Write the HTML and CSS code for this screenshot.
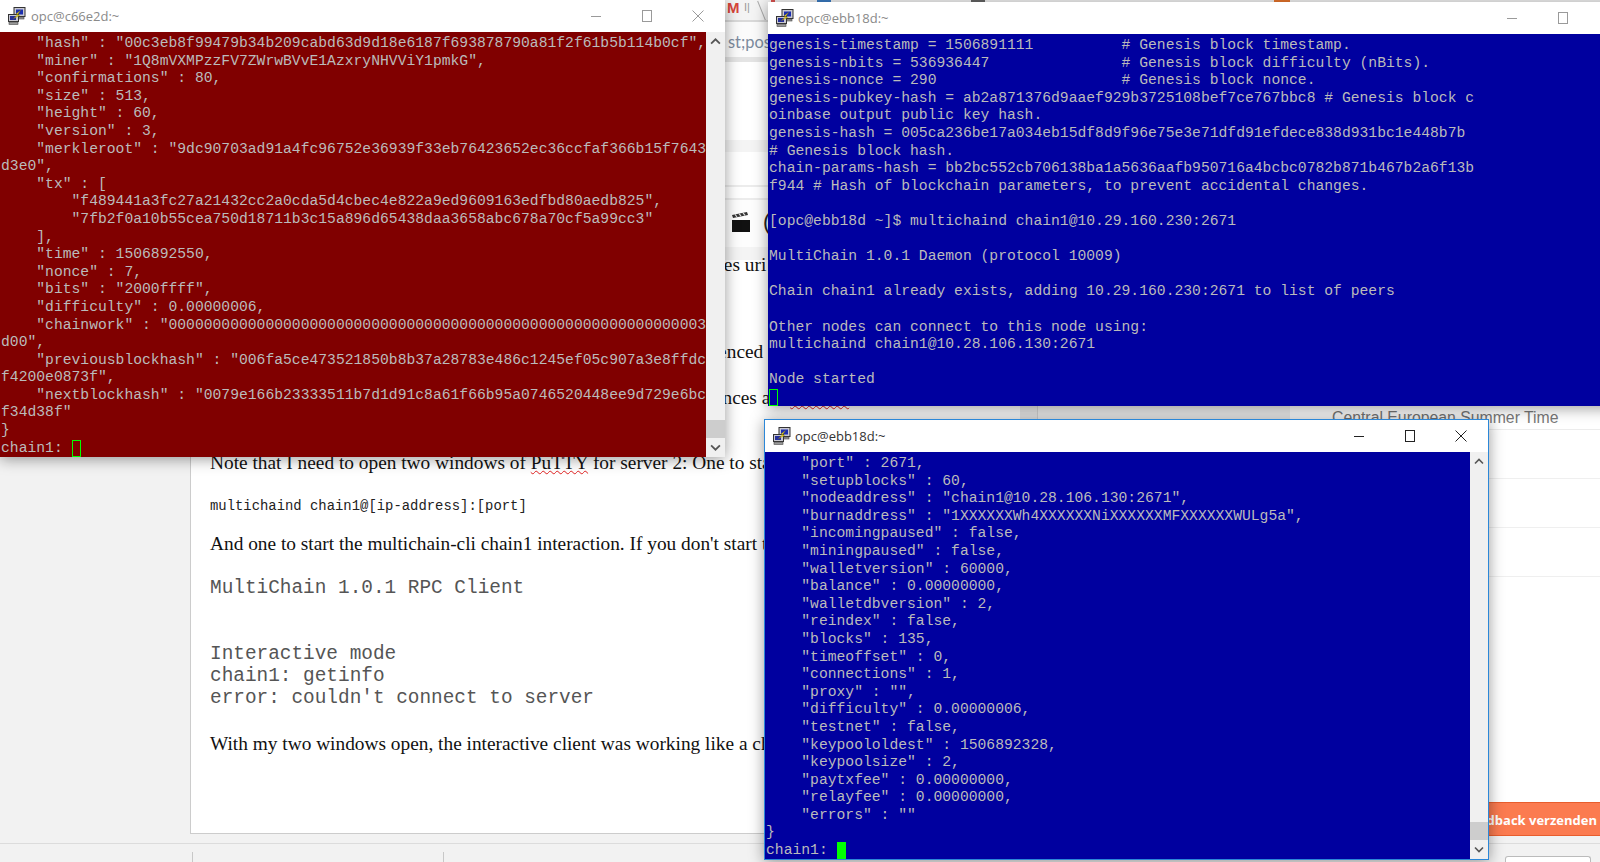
FILE: index.html
```html
<!DOCTYPE html>
<html lang="en">
<head>
<meta charset="utf-8">
<title>PuTTY windows over a blog editor</title>
<link rel="stylesheet" href="styles.css">
</head>
<body>
<svg class="defs" width="0" height="0" aria-hidden="true">
  <symbol id="putty" viewBox="0 0 18 18">
    <rect x="6" y="0.5" width="11" height="9" fill="#c9c9d2" stroke="#333"/>
    <rect x="8" y="2.5" width="7" height="5" fill="#1c2fb0"/>
    <rect x="7" y="10" width="9" height="2" fill="#999" stroke="#444" stroke-width=".6"/>
    <rect x="0.5" y="7.5" width="10" height="7" fill="#c9c9d2" stroke="#333"/>
    <rect x="2" y="9" width="6" height="4" fill="#26309a"/>
    <rect x="1" y="15" width="9" height="2.4" fill="#999" stroke="#444" stroke-width=".6"/>
    <path d="M12.5 3.5 L8 7 L10 7.6 L5.5 11.5 L11.5 8.4 L9.6 7.6 Z" fill="#f7e22a" stroke="#8a7a00" stroke-width=".4"/>
  </symbol>
  <symbol id="min" viewBox="0 0 12 12"><path d="M1 6.5H11" stroke="currentColor" fill="none"/></symbol>
  <symbol id="max" viewBox="0 0 12 12"><rect x="1.5" y="0.5" width="9" height="11" stroke="currentColor" fill="none"/></symbol>
  <symbol id="close" viewBox="0 0 12 12"><path d="M.5 .5L11.5 11.5M11.5 .5L.5 11.5" stroke="currentColor" fill="none"/></symbol>
  <symbol id="up" viewBox="0 0 10 6"><path d="M1 5L5 1L9 5" stroke="#555" stroke-width="1.6" fill="none"/></symbol>
  <symbol id="down" viewBox="0 0 10 6"><path d="M1 1L5 5L9 1" stroke="#555" stroke-width="1.6" fill="none"/></symbol>
</svg>

<div class="page">
  <div class="tabs">
    <span class="tab-m">M</span>
    <span class="tab-pause">I|</span>
    <span class="tab-slant"></span>
    <span class="fav fav-red"></span>
    <span class="fav fav-blue"></span>
    <span class="fav fav-grey"></span>
    <span class="fav fav-orange"></span>
  </div>
  <div class="addr"><span class="addr-text">st;post=the-editor</span></div>

  <main class="main">
    <div class="gutter"></div>
    <article class="card">
      <div class="rows">
        <div class="row-a"></div>
        <div class="row-band"></div>
        <div class="row-b"></div>
        <div class="row-c"></div>
        <div class="row-icons">
          <svg class="clapper" viewBox="0 0 18 20" aria-hidden="true">
            <path d="M0 8H18V20H0Z" fill="#111"/>
            <path d="M0 3L15 0L16 3L1 6Z" fill="#333"/>
            <path d="M3 2.4L5 5M7 1.6L9 4.2M11 .8L13 3.4" stroke="#ddd" stroke-width="1.2"/>
          </svg>
          <span class="paren">(</span>
        </div>
        <div class="row-band row-band-tall"></div>
      </div>
      <div class="editor">
        <p class="para first">Next I set up the second server, and this time the steps and machines uri</p>
        <p class="para gap-a">Then the chain can be joined by the second node too, as was referenced</p>
        <p class="para gap-b">In the PuTTY output of both servers below you can see the differences are <span class="spell">sudoers</span></p>
        <p class="para gap-c">Note that I need to open two windows of <span class="spell">PuTTY</span> for server 2: One to start the daemon</p>
        <p class="code">multichaind chain1@[ip-address]:[port]</p>
        <p class="para gap-d">And one to start the multichain-cli chain1 interaction. If you don't start the daemon first:</p>
        <pre class="output">MultiChain 1.0.1 RPC Client


Interactive mode
chain1: getinfo
error: couldn't connect to server</pre>
        <p class="para gap-e">With my two windows open, the interactive client was working like a charm.</p>
      </div>
    </article>
    <div class="page-scroll"></div>
    <aside class="middle"></aside>
    <aside class="right">
      <div class="tz">Central European Summer Time</div>
      <div class="tz-row"></div>
      <div class="tz-row"></div>
      <div class="tz-row"></div>
      <div class="right-fill"></div>
      <div class="feedback">Feedback verzenden</div>
      <div class="right-foot"></div>
    </aside>
  </main>

  <footer class="foot">
    <span class="foot-a"></span>
    <span class="foot-b"></span>
    <span class="foot-btn"></span>
  </footer>
</div>

<section class="win win-red">
  <header class="bar">
    <svg class="icon"><use href="#putty"/></svg>
    <span class="title">opc@c66e2d:~</span>
    <span class="ctrls">
      <svg class="ctl"><use href="#min"/></svg>
      <svg class="ctl"><use href="#max"/></svg>
      <svg class="ctl"><use href="#close"/></svg>
    </span>
  </header>
  <div class="body">
<pre class="term term-red">    "hash" : "00c3eb8f99479b34b209cabd63d9d18e6187f693878790a81f2f61b5b114b0cf",
    "miner" : "1Q8mVXMPzzFV7ZWrwBVvE1AzxryNHVViY1pmkG",
    "confirmations" : 80,
    "size" : 513,
    "height" : 60,
    "version" : 3,
    "merkleroot" : "9dc90703ad91a4fc96752e36939f33eb76423652ec36ccfaf366b15f7643
d3e0",
    "tx" : [
        "f489441a3fc27a21432cc2a0cda5d4cbec4e822a9ed9609163edfbd80aedb825",
        "7fb2f0a10b55cea750d18711b3c15a896d65438daa3658abc678a70cf5a99cc3"
    ],
    "time" : 1506892550,
    "nonce" : 7,
    "bits" : "2000ffff",
    "difficulty" : 0.00000006,
    "chainwork" : "0000000000000000000000000000000000000000000000000000000000003
d00",
    "previousblockhash" : "006fa5ce473521850b8b37a28783e486c1245ef05c907a3e8ffdc
f4200e0873f",
    "nextblockhash" : "0079e166b23333511b7d1d91c8a61f66b95a0746520448ee9d729e6bc
f34d38f"
}
chain1: <span class="cursor hollow"></span></pre>
    <div class="sb">
      <svg class="arrow"><use href="#up"/></svg>
      <span class="sb-fill"></span>
      <span class="thumb"></span>
      <svg class="arrow"><use href="#down"/></svg>
    </div>
  </div>
</section>

<section class="win win-top">
  <header class="bar">
    <svg class="icon"><use href="#putty"/></svg>
    <span class="title">opc@ebb18d:~</span>
    <span class="ctrls">
      <svg class="ctl"><use href="#min"/></svg>
      <svg class="ctl"><use href="#max"/></svg>
      <svg class="ctl"><use href="#close"/></svg>
    </span>
  </header>
  <div class="body">
<pre class="term term-blue">genesis-timestamp = 1506891111          # Genesis block timestamp.
genesis-nbits = 536936447               # Genesis block difficulty (nBits).
genesis-nonce = 290                     # Genesis block nonce.
genesis-pubkey-hash = ab2a871376d9aaef929b3725108bef7ce767bbc8 # Genesis block c
oinbase output public key hash.
genesis-hash = 005ca236be17a034eb15df8d9f96e75e3e71dfd91efdece838d931bc1e448b7b
# Genesis block hash.
chain-params-hash = bb2bc552cb706138ba1a5636aafb950716a4bcbc0782b871b467b2a6f13b
f944 # Hash of blockchain parameters, to prevent accidental changes.

[opc@ebb18d ~]$ multichaind chain1@10.29.160.230:2671

MultiChain 1.0.1 Daemon (protocol 10009)

Chain chain1 already exists, adding 10.29.160.230:2671 to list of peers

Other nodes can connect to this node using:
multichaind chain1@10.28.106.130:2671

Node started
<span class="cursor hollow"></span></pre>
  </div>
</section>

<section class="win win-front">
  <header class="bar">
    <svg class="icon"><use href="#putty"/></svg>
    <span class="title">opc@ebb18d:~</span>
    <span class="ctrls">
      <svg class="ctl"><use href="#min"/></svg>
      <svg class="ctl"><use href="#max"/></svg>
      <svg class="ctl"><use href="#close"/></svg>
    </span>
  </header>
  <div class="body">
<pre class="term term-blue">    "port" : 2671,
    "setupblocks" : 60,
    "nodeaddress" : "chain1@10.28.106.130:2671",
    "burnaddress" : "1XXXXXXWh4XXXXXXNiXXXXXXMFXXXXXXWULg5a",
    "incomingpaused" : false,
    "miningpaused" : false,
    "walletversion" : 60000,
    "balance" : 0.00000000,
    "walletdbversion" : 2,
    "reindex" : false,
    "blocks" : 135,
    "timeoffset" : 0,
    "connections" : 1,
    "proxy" : "",
    "difficulty" : 0.00000006,
    "testnet" : false,
    "keypoololdest" : 1506892328,
    "keypoolsize" : 2,
    "paytxfee" : 0.00000000,
    "relayfee" : 0.00000000,
    "errors" : ""
}
chain1: <span class="cursor solid"></span></pre>
    <div class="sb">
      <svg class="arrow"><use href="#up"/></svg>
      <span class="sb-fill"></span>
      <span class="thumb"></span>
      <svg class="arrow"><use href="#down"/></svg>
    </div>
  </div>
</section>
</body>
</html>
```
FILE: styles.css
```css
* { box-sizing: border-box; }
html, body { margin: 0; height: 100%; overflow: hidden; }
body { width: 1600px; height: 862px; position: relative; background: #f2f2f2; font-family: "Liberation Sans", sans-serif; }
.defs { position: absolute; }

/* browser page behind the windows */
.page { display: flex; flex-direction: column; height: 862px; }
.tabs { height: 22px; flex: none; display: flex; align-items: flex-start; background: #f4f4f4; border-bottom: 2px solid #d9d9d9; padding-left: 727px; overflow: hidden; }
.tab-m { width: 14px; font-size: 15px; line-height: 15px; font-weight: 700; color: #d8453a; }
.tab-pause { width: 14px; margin-left: 3px; font-size: 11px; line-height: 14px; color: #999; }
.tab-slant { width: 1px; height: 26px; margin-left: 4px; background: #aaa; transform: rotate(-22deg); }
.fav { height: 2px; }
.fav-red { width: 4px; margin-left: 8px; height: 14px; background: #d9534f; }
.fav-blue { width: 14px; margin-left: 42px; background: #3b7cc4; }
.fav-grey { width: 14px; margin-left: 140px; background: #666; }
.fav-orange { width: 16px; margin-left: 289px; background: #e8762c; }
.addr { height: 40px; flex: none; background: #fbfbfb; border-bottom: 5px solid #e4e4e4; padding: 8px 0 0 728px; overflow: hidden; white-space: nowrap; }
.addr-text { font-family: Lato, "Liberation Sans", sans-serif; font-size: 16.4px; line-height: 24px; color: #7d8b9e; }

.main { height: 782px; flex: none; display: grid; grid-template-columns: 190px 830px 18px 252px 310px; border-bottom: 1px solid #dcdcdc; }
.gutter { background: #f2f2f2; }
.card { height: 772px; background: #fff; border-left: 1px solid #ccc; border-bottom: 1px solid #ccc; overflow: hidden; }
.rows { display: flex; flex-direction: column; height: 198px; }
.row-a { height: 78px; }
.row-band { height: 12px; background: #f4f4f4; }
.row-band-tall { height: 13px; }
.row-b { height: 35px; border-bottom: 2px solid #ececec; }
.row-c { height: 13px; border-bottom: 2px solid #ececec; }
.row-icons { height: 47px; display: flex; align-items: center; padding: 0 0 4px 541px; background: #fdfdfd; }
.clapper { width: 18px; height: 20px; }
.paren { margin-left: 13px; font-size: 22px; color: #222; }
.editor { padding-left: 19px; }
.para { margin: 0; font-family: "Liberation Serif", serif; font-size: 19.35px; line-height: 22px; color: #111; white-space: nowrap; }
.first { margin-top: -6px; }
.gap-a { margin-top: 65px; }
.gap-b { margin-top: 24px; }
.gap-c { margin-top: 43px; }
.gap-d { margin-top: 16px; }
.gap-e { margin-top: 24px; }
.spell { text-decoration: underline wavy #e02020; text-decoration-thickness: 1px; }
.code { margin: 21px 0 0; font-family: "Liberation Mono", monospace; font-size: 13.9px; line-height: 22px; color: #222; white-space: nowrap; }
.output { margin: 22px 0 0; font-family: "Liberation Mono", monospace; font-size: 19.4px; line-height: 22px; color: #555; }

.page-scroll { background: #eaeaea; border-right: 1px solid #d4d4d4; }
.middle { background: #f0f0f0; }
.right { display: flex; flex-direction: column; background: #fff; }
.tz { height: 368px; flex: none; display: flex; align-items: flex-end; padding: 0 0 1px 42px; border-bottom: 1px solid #ececec; font-size: 15.8px; line-height: 20px; color: #777; white-space: nowrap; }
.tz-row { height: 49px; flex: none; border-bottom: 1px solid #efefef; }
.right-fill { flex: 1; }
.feedback { height: 34px; flex: none; padding-right: 3px; text-align: right; background: #fb7b50; border-top: 1px solid #e85d2d; border-bottom: 1px solid #e85d2d; font-family: "Open Sans", sans-serif; font-size: 13px; line-height: 34px; font-weight: 700; color: #fff; white-space: nowrap; }
.right-foot { height: 7px; flex: none; background: #f2f2f2; }

.foot { height: 18px; flex: none; display: flex; align-items: flex-end; padding-left: 192px; overflow: hidden; background: #f2f2f2; }
.foot-a, .foot-b { width: 1px; height: 10px; background: #c8c8c8; }
.foot-b { margin-left: 250px; }
.foot-btn { width: 86px; height: 6px; margin-left: 1061px; background: #fff; border: 1px solid #bbb; border-bottom: 0; border-radius: 3px 3px 0 0; }

/* PuTTY windows, free on the desktop */
.win { position: absolute; display: flex; flex-direction: column; background: #fff; box-shadow: 0 2px 14px rgba(0, 0, 0, .4); }
.win-red { left: 0; top: 0; width: 725px; height: 457px; }
.win-top { left: 768px; top: 2px; width: 900px; height: 404px; }
.win-front { left: 764px; top: 419px; width: 725px; height: 441px; border: 1px solid #2b87d8; }
.bar { height: 32px; flex: none; display: flex; align-items: center; background: #fff; padding-left: 8px; }
.icon { width: 18px; height: 18px; flex: none; }
.title { margin-left: 5px; font-family: "Open Sans", sans-serif; font-size: 13px; color: #8a8a8a; white-space: nowrap; }
.win-top .title { margin-left: 4px; }
.win-front .title { margin-left: 4px; color: #333; }
.ctrls { margin-left: auto; display: flex; gap: 39px; padding-right: 21px; color: #9a9a9a; }
.win-top .ctrls { position: relative; margin-left: 0; padding: 0; left: 617px; }
.win-front .ctrls { color: #222; }
.ctl { width: 12px; height: 12px; }
.body { flex: 1; display: flex; min-height: 0; }
.term { flex: 1; margin: 0; padding: 3px 0 0 1px; font-family: "Liberation Mono", monospace; font-size: 14.7px; line-height: 17.6px; color: #bbb; overflow: hidden; }
.term-red { background: #800000; }
.term-blue { background: #00009f; }
.cursor { display: inline-block; width: 9px; height: 17.6px; vertical-align: top; }
.hollow { border: 1px solid #00ff00; }
.solid { background: #00ff00; }
.sb { width: 19px; flex: none; display: flex; flex-direction: column; background: #f0f0f0; }
.win-front .sb { width: 18px; }
.arrow { width: 100%; height: 19px; flex: none; padding: 6px 4px; }
.sb-fill { flex: 1; }
.thumb { height: 18px; flex: none; background: #cdcdcd; }
```
